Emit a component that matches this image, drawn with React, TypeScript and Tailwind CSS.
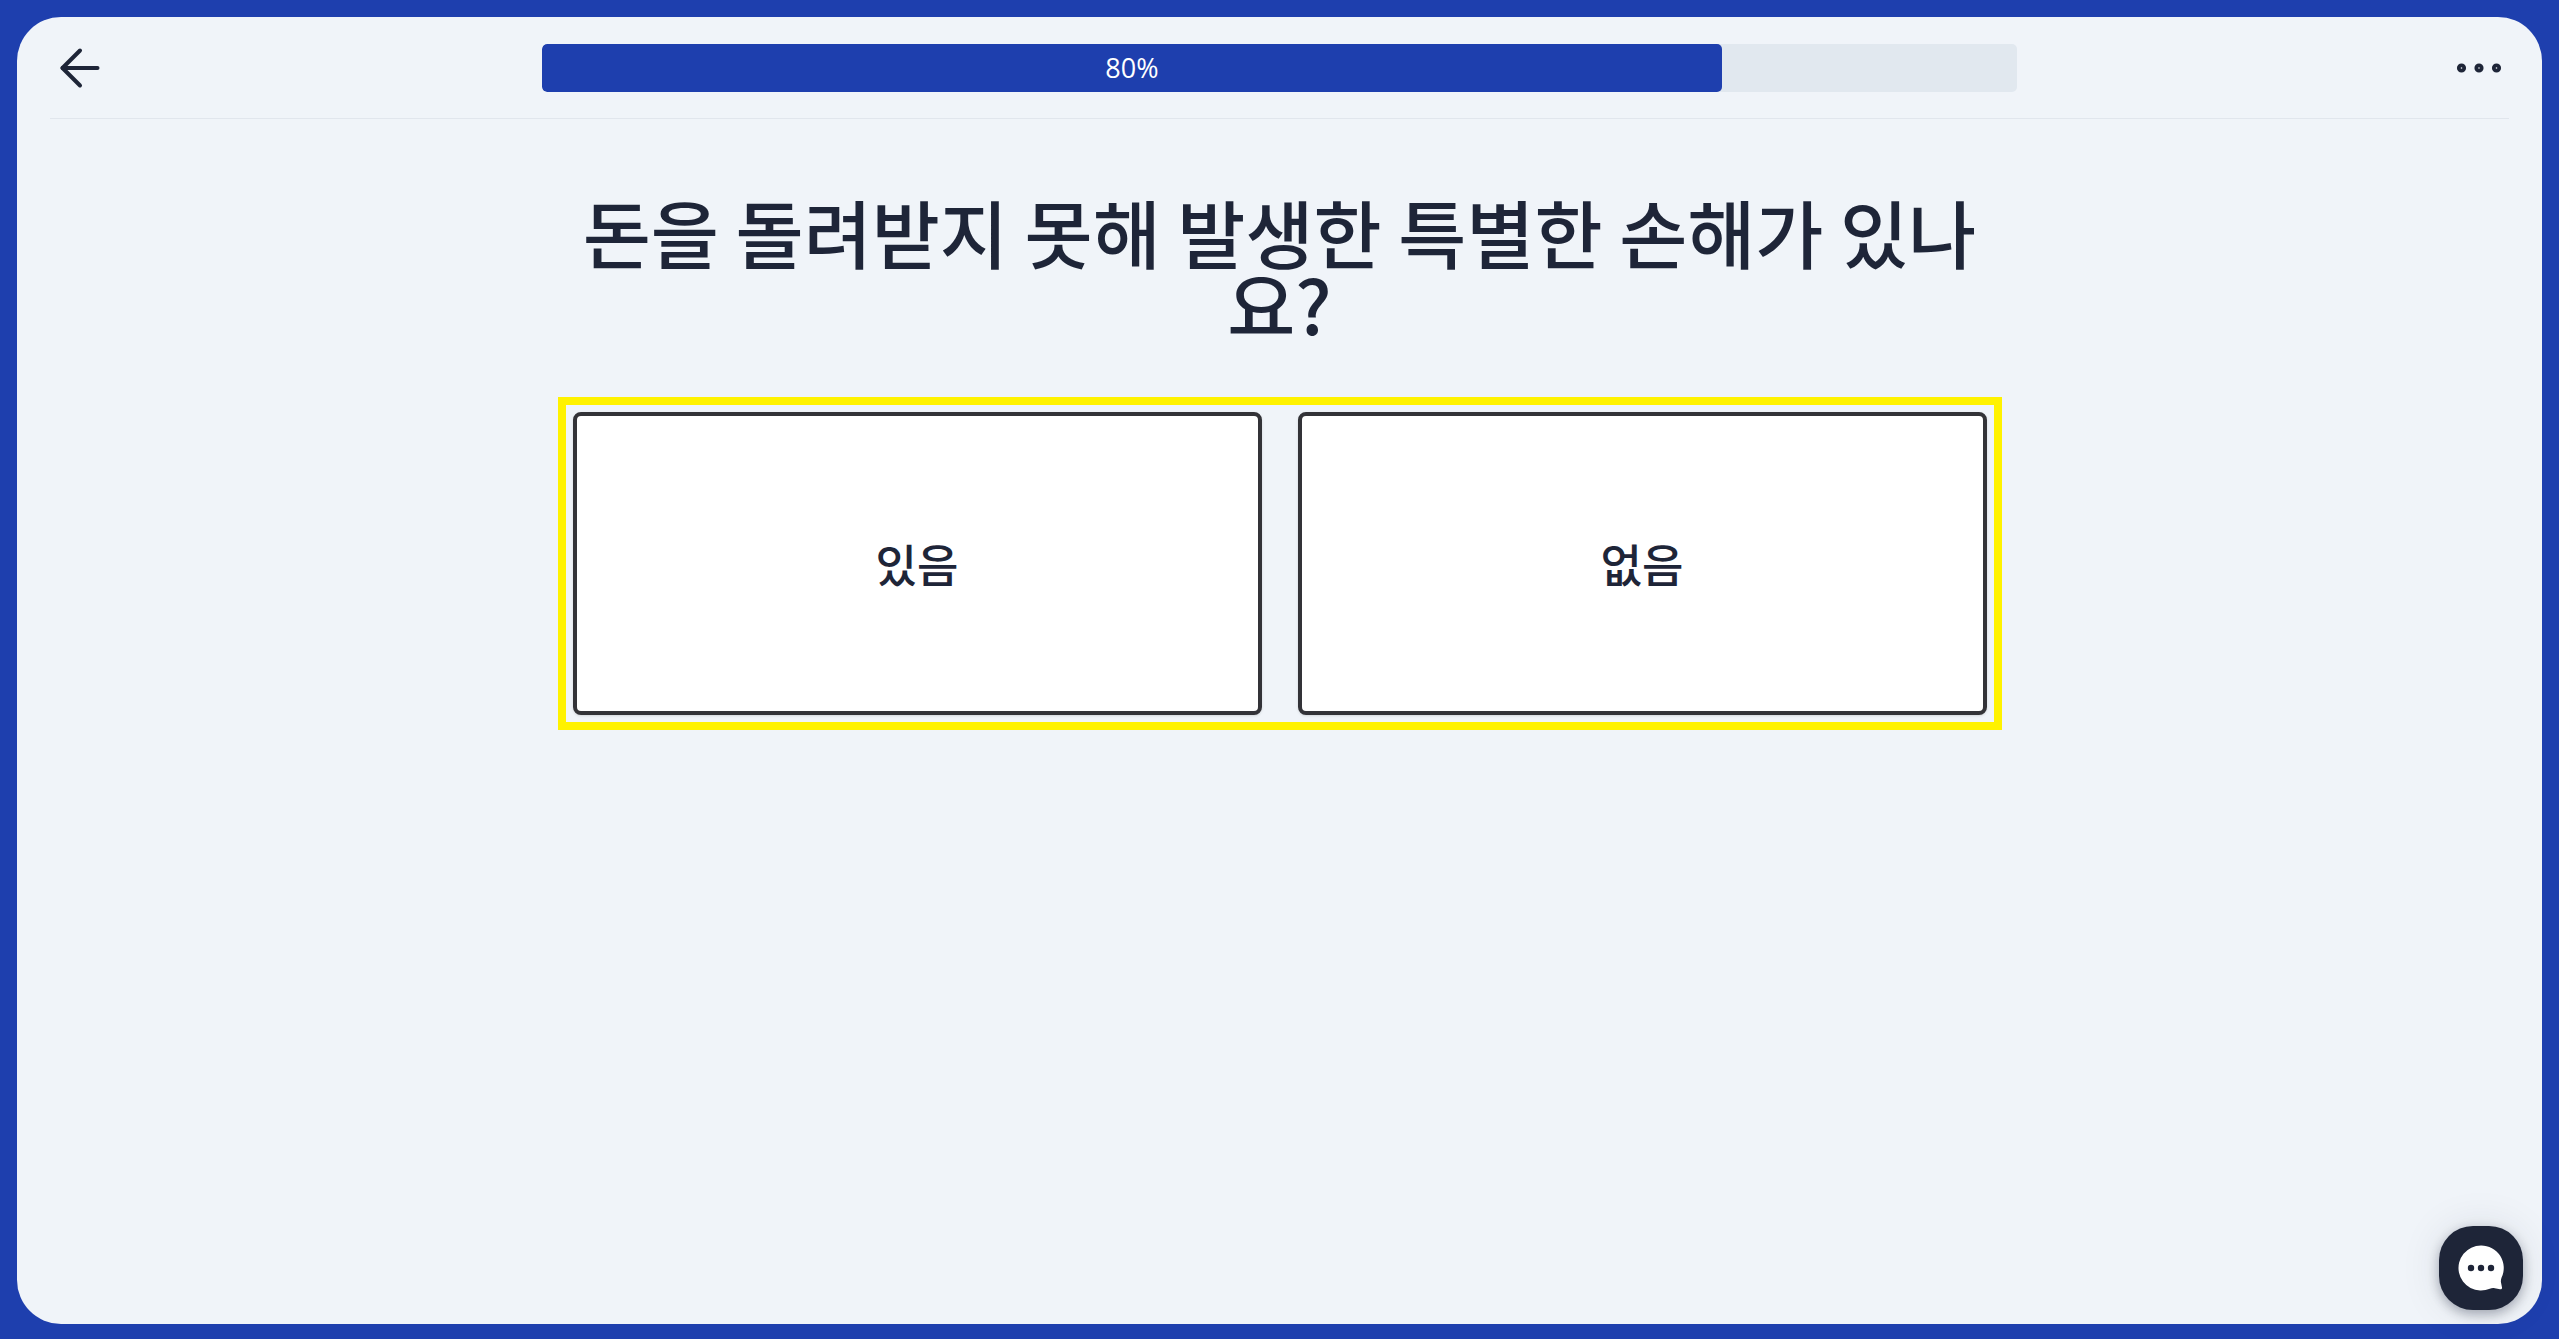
import { ArrowLeft } from "lucide-react";

const progress = 80;

const options = [
  { value: "yes", label: "있음" },
  { value: "no", label: "없음" },
];

function MoreIcon() {
  return (
    <svg width="60" height="60" viewBox="0 0 60 60" fill="none" stroke="currentColor" strokeWidth="3.75" aria-hidden="true">
      <circle cx="12.5" cy="30" r="2.7" />
      <circle cx="30" cy="30" r="2.7" />
      <circle cx="47.5" cy="30" r="2.7" />
    </svg>
  );
}

function ChatIcon() {
  return (
    <svg width="48" height="48" viewBox="0 0 48 48" aria-hidden="true">
      <path
        d="M24 1.5a22.5 22.5 0 1 0 8.800 43.200c1.600-.700 3.400-.800 5-.500l5.200 1c1.200.2 2.200-.4 2-1.600l-1-5.200c-.3-1.500 0-3.400.6-4.800A22.500 22.500 0 0 0 24 1.500Z"
        fill="#fff"
      />
      <circle cx="14" cy="24" r="3.2" fill="#1e2538" />
      <circle cx="24" cy="24" r="3.2" fill="#1e2538" />
      <circle cx="34" cy="24" r="3.2" fill="#1e2538" />
    </svg>
  );
}

function Header() {
  return (
    <header className="mx-[33px] flex items-center justify-between border-b border-[#e1e6ed] pt-[21px] pb-5">
      <button type="button" aria-label="뒤로">
        <ArrowLeft size={60} strokeWidth={1.6} />
      </button>
      <div
        role="progressbar"
        aria-label="진행률"
        aria-valuenow={progress}
        aria-valuemin={0}
        aria-valuemax={100}
        className="h-12 w-3/5 overflow-hidden rounded-[5px] bg-[#e1e8ef]"
      >
        <div
          className="flex h-full items-center justify-center rounded-[5px] bg-[#1e3fae] font-['Open_Sans',sans-serif] text-[27px] leading-[46px] text-white"
          style={{ width: `${progress}%` }}
        >
          {progress}%
        </div>
      </div>
      <button type="button" aria-label="더보기">
        <MoreIcon />
      </button>
    </header>
  );
}

export default function App() {
  return (
    <div className="flex min-h-screen flex-col bg-[#1e3fae] px-[17px] pt-[17px] pb-[15px] font-['Noto_Sans_CJK_KR',sans-serif] text-[#1e2538]">
      <div className="flex-1 rounded-[44px] bg-[#f0f4f9]">
        <Header />
        <main className="mx-auto max-w-[1444px]">
          <h1 className="mt-[76px] text-center text-[74px] leading-[72px] font-medium">
            돈을 돌려받지 못해 발생한 특별한 손해가 있나요?
          </h1>
          <div className="mt-[58px] grid grid-cols-2 gap-9 border-8 border-[#fff200] p-[7px]">
            {options.map((o) => (
              <button
                key={o.value}
                type="button"
                className="h-[303px] rounded-lg border-4 border-[#333338] bg-white text-[45px] font-medium shadow-sm"
              >
                {o.label}
              </button>
            ))}
          </div>
        </main>
      </div>

      <button
        type="button"
        aria-label="채팅 상담"
        className="fixed right-9 bottom-[29px] flex size-[84px] items-center justify-center rounded-[34px] bg-[#1e2538] shadow-[0_4px_12px_rgba(30,37,56,0.35),0_0_40px_rgba(30,37,56,0.1)]"
      >
        <ChatIcon />
      </button>
    </div>
  );
}
